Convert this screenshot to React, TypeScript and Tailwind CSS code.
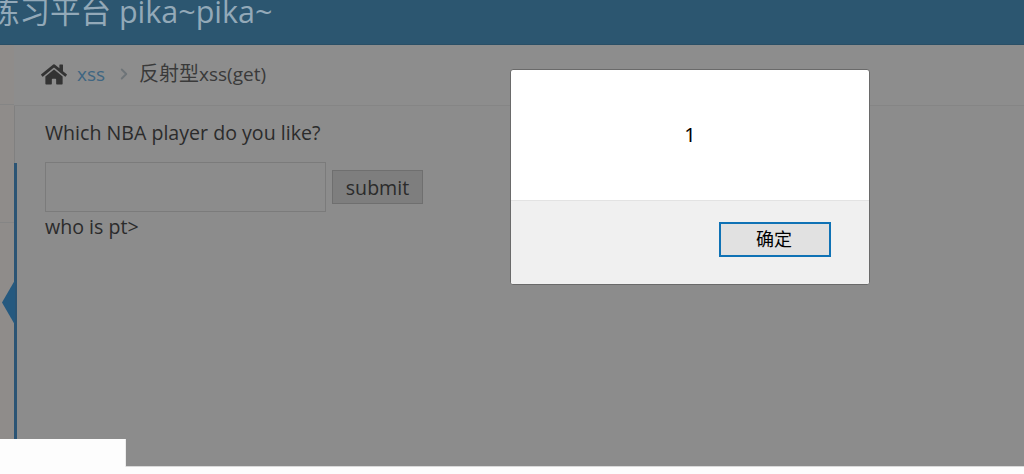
import { FaHome } from 'react-icons/fa'
import { LuChevronRight } from 'react-icons/lu'

const openSans = "font-['Open_Sans','Noto_Sans_CJK_SC',sans-serif]"

export default function App() {
  return (
    <div className={`relative flex h-[474px] w-[1024px] flex-col overflow-hidden bg-[#fdfdfd] ${openSans}`}>
      {/* Page behind the alert */}
      <div className="flex h-[467px] flex-col border-b border-[#d9d9d9] bg-[#8c8c8c]">
        {/* Header */}
        <header className="h-[45px] shrink-0 overflow-hidden border-b border-[#2a4f66] bg-[#2c5670]">
          <div className="-ml-[11px] -mt-[9px] whitespace-nowrap text-[30.5px] leading-[40px] text-[#93a9b8]">
            练习平台 pika~pika~
          </div>
        </header>

        <div className="flex min-h-0 flex-1">
          {/* Sidebar edge */}
          <aside className="flex w-[15px] shrink-0 flex-col border-r border-[#808080] bg-[#8f8c8a]">
            <div className="h-[60px] border-b border-[#858585]" />
            <div className="h-[118px] border-b border-[#858585]" />
          </aside>

          {/* Active menu bar */}
          <div className="-ml-px flex w-[3px] shrink-0 flex-col">
            <div className="h-[118px]" />
            <div className="flex-1 bg-[#2b5474]" />
          </div>

          <main className="-ml-[3px] min-w-0 flex-1">
            {/* Breadcrumb */}
            <nav className="flex h-[61px] items-center border-b border-[#858585] bg-[#8d8d8d] pl-[27px] pb-[2px] text-[19px] text-[#3a3a3a]">
              <FaHome className="h-[23px] w-[26px] text-[#333]" />
              <a className="ml-[10px] text-[#3f6682]">xss</a>
              <LuChevronRight strokeWidth={2.5} className="ml-[10px] h-[18px] w-[18px] text-[#6e7478]" />
              <span className="ml-[6px]">
                <span className="text-[20px]">反射型</span>xss(get)
              </span>
            </nav>

            {/* Form */}
            <section className="pl-[31px] pt-[13px] text-[19.6px] leading-[28px] text-[#2b2b2b]">
              <p>Which NBA player do you like?</p>
              <form className="mt-[15px] flex items-center gap-[6px]">
                <input className="h-[50px] w-[281px] border border-[#7b7b7b] bg-[#8c8c8c]" />
                <button type="button" className="h-[34px] w-[91px] border border-[#6f6f6f] bg-[#7e7e7e] pt-[2px] text-[19.6px] leading-none text-[#2b2b2b]">
                  submit
                </button>
              </form>
              <p className="mt-px">who is pt&gt;</p>
            </section>
          </main>
        </div>
      </div>

      {/* Left arrow on the sidebar */}
      <div className="absolute left-[2px] top-[280px] h-[45px] w-[13px] bg-[#25597f] [clip-path:polygon(100%_0,100%_100%,0_50%)]" />

      {/* Bottom-left status bubble */}
      <div className="absolute bottom-[7px] left-0 h-[28px] w-[126px] border-r border-[#ececec] bg-[#fdfdfd]" />

      {/* Alert dialog */}
      <div className="absolute left-[510px] top-[69px] flex h-[216px] w-[360px] flex-col overflow-hidden rounded-[3px] border border-[#6a6a6a] bg-white font-['Noto_Sans','Noto_Sans_CJK_SC',sans-serif] text-black">
        <div className="flex h-[131px] items-center justify-center border-b border-[#e3e3e3] text-[20px]">1</div>
        <div className="flex flex-1 items-start justify-end bg-[#f0f0f0] pr-[38px] pt-[21px]">
          <button type="button" className="h-[35px] w-[112px] border-2 border-[#0f72b5] bg-[#e1e1e1] pb-[2px] pr-[2px] text-[18px] leading-none">
            确定
          </button>
        </div>
      </div>
    </div>
  )
}
